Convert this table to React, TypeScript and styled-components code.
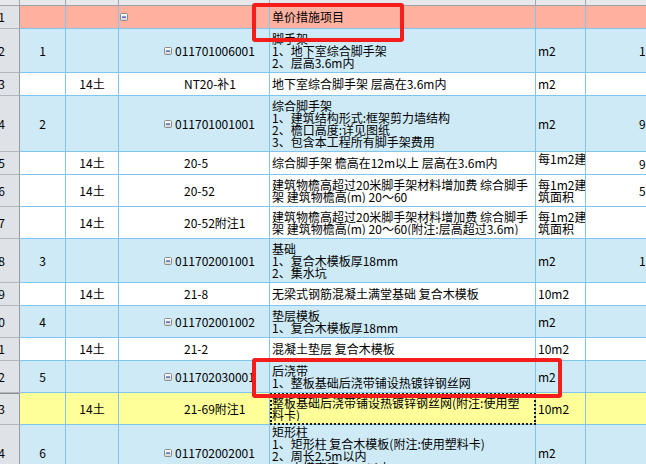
import React from "react";
import styled, { createGlobalStyle } from "styled-components";

const GlobalStyle = createGlobalStyle`
  * { box-sizing: border-box; }
  html, body { margin: 0; padding: 0; background: #ffffff; overflow: hidden; }
  body {
    font-family: "Noto Sans CJK SC", "Noto Sans", sans-serif;
    font-size: 12px;
    color: #000;
  }
`;

const COLS = "20px 46px 53px 151px 266px 50px 120px";
const GRID = "#80c4f0";

type Kind = "group" | "item" | "sub" | "sel";

const BG: Record<Kind, string> = {
  group: "#ffb19f",
  item: "#ceeaf7",
  sub: "#ffffff",
  sel: "#ffff99",
};

const Sheet = styled.div`
  position: relative;
  width: 706px;
`;

const Row = styled.div<{ $h: number; $bg: string }>`
  display: grid;
  grid-template-columns: ${COLS};
  height: ${(p) => p.$h}px;
  background: ${(p) => p.$bg};
`;

const HeadCell = styled.div`
  background: #e6e8ec;
  border-right: 1px solid #a6a8ac;
  border-bottom: 1px solid #a0a2a6;
`;

const NumCell = styled.div<{ $current?: boolean }>`
  background: #dfe2e7;
  border-right: 1px solid #9a9a9a;
  border-bottom: 1px solid #b3b6bc;
  box-shadow: ${(p) => (p.$current ? "inset 0 1px 0 #8a8a8a" : "none")};
  display: flex;
  align-items: center;
  justify-content: flex-end;
  padding-right: 14px;
  overflow: hidden;
  white-space: nowrap;
  line-height: 12px;
`;

const Cell = styled.div<{ $center?: boolean; $top?: boolean; $pad?: number; $focus?: boolean }>`
  border-right: 1px solid ${GRID};
  border-bottom: 1px solid ${GRID};
  overflow: hidden;
  display: flex;
  flex-direction: column;
  justify-content: ${(p) => (p.$top ? "flex-start" : "center")};
  align-items: ${(p) => (p.$center ? "center" : "flex-start")};
  padding-left: ${(p) => p.$pad ?? 2}px;
  padding-top: ${(p) => (p.$top ? 1 : 0)}px;
  outline: ${(p) => (p.$focus ? "2px dotted #1a1a1a" : "none")};
  outline-offset: -2px;
`;

const QtyCell = styled.div`
  border-right: 1px solid ${GRID};
  border-bottom: 1px solid ${GRID};
  overflow: hidden;
  display: flex;
  align-items: center;
  padding-left: 53px;
  white-space: nowrap;
`;

const LineStack = styled.div<{ $max: number }>`
  max-height: ${(p) => p.$max * 12}px;
  overflow: hidden;
  flex: none;
`;

const CodeCell = styled.div<{ $indent: number }>`
  border-right: 1px solid ${GRID};
  border-bottom: 1px solid ${GRID};
  overflow: hidden;
  display: flex;
  align-items: center;
  gap: 3px;
  padding-left: ${(p) => p.$indent}px;
  white-space: nowrap;
  line-height: 12px;
`;

const Line = styled.div`
  white-space: nowrap;
  line-height: 12px;
  height: 12px;
`;

const Annotation = styled.div<{ $x: number; $y: number; $w: number; $h: number }>`
  position: absolute;
  left: ${(p) => p.$x}px;
  top: ${(p) => p.$y}px;
  width: ${(p) => p.$w}px;
  height: ${(p) => p.$h}px;
  border: 4px solid #f51c1c;
  border-radius: 3px;
  pointer-events: none;
`;

const Toggle = () => (
  <svg width="8" height="8" viewBox="0 0 8 8" style={{ flex: "none" }}>
    <defs>
      <linearGradient id="tgfill" x1="0" y1="0" x2="0" y2="1">
        <stop offset="0" stopColor="#ffffff" />
        <stop offset="1" stopColor="#d4d4d4" />
      </linearGradient>
    </defs>
    <rect x="0.5" y="0.5" width="7" height="7" rx="1" fill="url(#tgfill)" stroke="#8a8a8a" />
    <rect x="2" y="3.5" width="4" height="1.2" fill="#2b4aa8" />
  </svg>
);

type RowData = {
  num: number;
  kind: Kind;
  h: number;
  seq?: string;
  cat?: string;
  code?: string;
  level: 0 | 1 | 2;
  toggle?: boolean;
  desc: string[];
  unit?: string[];
  qty?: string;
};

const ROWS: RowData[] = [
  { num: 1, kind: "group", h: 23, level: 0, toggle: true, desc: ["单价措施项目"] },
  {
    num: 2, kind: "item", h: 44, seq: "1", level: 1, toggle: true, code: "011701006001",
    desc: ["脚手架", "1、地下室综合脚手架", "2、层高3.6m内"], unit: ["m2"], qty: "1086.88",
  },
  { num: 3, kind: "sub", h: 23, cat: "14土", level: 2, code: "NT20-补1", desc: ["地下室综合脚手架 层高在3.6m内"], unit: ["m2"] },
  {
    num: 4, kind: "item", h: 56, seq: "2", level: 1, toggle: true, code: "011701001001",
    desc: ["综合脚手架", "1、建筑结构形式:框架剪力墙结构", "2、檐口高度:详见图纸", "3、包含本工程所有脚手架费用"],
    unit: ["m2"], qty: "9586.21",
  },
  {
    num: 5, kind: "sub", h: 23, cat: "14土", level: 2, code: "20-5",
    desc: ["综合脚手架 檐高在12m以上 层高在3.6m内"], unit: ["每1m2建", "筑面积"], qty: "95.862",
  },
  {
    num: 6, kind: "sub", h: 32, cat: "14土", level: 2, code: "20-52",
    desc: ["建筑物檐高超过20米脚手架材料增加费 综合脚手", "架 建筑物檐高(m) 20～60"],
    unit: ["每1m2建", "筑面积"], qty: "59.586",
  },
  {
    num: 7, kind: "sub", h: 32, cat: "14土", level: 2, code: "20-52附注1",
    desc: ["建筑物檐高超过20米脚手架材料增加费 综合脚手", "架 建筑物檐高(m) 20～60(附注:层高超过3.6m)"],
    unit: ["每1m2建", "筑面积"],
  },
  {
    num: 8, kind: "item", h: 44, seq: "3", level: 1, toggle: true, code: "011702001001",
    desc: ["基础", "1、复合木模板厚18mm", "2、集水坑"], unit: ["m2"], qty: "1.52",
  },
  { num: 9, kind: "sub", h: 23, cat: "14土", level: 2, code: "21-8", desc: ["无梁式钢筋混凝土满堂基础 复合木模板"], unit: ["10m2"] },
  {
    num: 10, kind: "item", h: 32, seq: "4", level: 1, toggle: true, code: "011702001002",
    desc: ["垫层模板", "1、复合木模板厚18mm"], unit: ["m2"],
  },
  { num: 11, kind: "sub", h: 23, cat: "14土", level: 2, code: "21-2", desc: ["混凝土垫层 复合木模板"], unit: ["10m2"] },
  {
    num: 12, kind: "item", h: 32, seq: "5", level: 1, toggle: true, code: "011702030001",
    desc: ["后浇带", "1、整板基础后浇带铺设热镀锌钢丝网"], unit: ["m2"],
  },
  {
    num: 13, kind: "sel", h: 32, cat: "14土", level: 2, code: "21-69附注1",
    desc: ["整板基础后浇带铺设热镀锌钢丝网(附注:使用塑", "料卡)"], unit: ["10m2"],
  },
  {
    num: 14, kind: "item", h: 56, seq: "6", level: 1, toggle: true, code: "011702002001",
    desc: ["矩形柱", "1、矩形柱 复合木模板(附注:使用塑料卡)", "2、周长2.5m以内", "3、支模高度3.6m以内", "4、其他满足设计要求"],
    unit: ["m2"],
  },
];

const INDENT: Record<number, number> = { 0: 1, 1: 45, 2: 65 };

const fitLines = (h: number) => Math.floor((h - 3) / 12);
const overflows = (lines: number, h: number) => lines > fitLines(h);

const Lines = ({ items, h }: { items: string[]; h: number }) => (
  <LineStack $max={fitLines(h)}>
    {items.map((t, i) => (
      <Line key={i}>{t}</Line>
    ))}
  </LineStack>
);

const DataRow = ({ r }: { r: RowData }) => {
  const unit = r.unit ?? [];
  return (
    <Row $h={r.h} $bg={BG[r.kind]}>
      <NumCell $current={r.kind === "sel"}>{r.num}</NumCell>
      <Cell $center $pad={0}>
        {r.seq && <Line>{r.seq}</Line>}
      </Cell>
      <Cell $center $pad={0}>
        {r.cat && <Line>{r.cat}</Line>}
      </Cell>
      <CodeCell $indent={INDENT[r.level]}>
        {r.toggle && <Toggle />}
        {r.code && <span>{r.code}</span>}
      </CodeCell>
      <Cell $top={overflows(r.desc.length, r.h)} $focus={r.kind === "sel"}>
        <Lines items={r.desc} h={r.h} />
      </Cell>
      <Cell $top={overflows(unit.length, r.h)}>
        <Lines items={unit} h={r.h} />
      </Cell>
      <QtyCell>{r.qty ?? ""}</QtyCell>
    </Row>
  );
};

export default function App() {
  return (
    <>
      <GlobalStyle />
      <Sheet>
        <Row $h={6} $bg="#e6e8ec">
          {Array.from({ length: 7 }).map((_, i) => (
            <HeadCell key={i} />
          ))}
        </Row>
        {ROWS.map((r) => (
          <DataRow key={r.num} r={r} />
        ))}
        <Annotation $x={252} $y={3} $w={152} $h={39} />
        <Annotation $x={252} $y={358} $w={310} $h={40} />
      </Sheet>
    </>
  );
}
